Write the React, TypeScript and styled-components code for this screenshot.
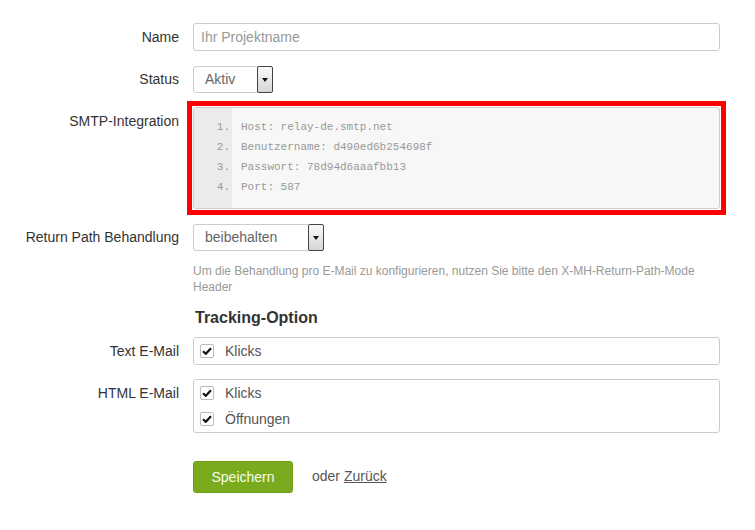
import React from "react";
import styled, { createGlobalStyle } from "styled-components";

const GlobalStyle = createGlobalStyle`
  html, body { margin: 0; padding: 0; background: #fff; }
  body {
    font-family: "Liberation Sans", Arial, sans-serif;
    font-size: 14px;
    color: #333;
  }
`;

const Form = styled.form`
  width: 755px;
  padding-top: 23px;
  display: flex;
  flex-direction: column;
`;

const Row = styled.div<{ $mb: number }>`
  display: grid;
  grid-template-columns: 179px 527px;
  column-gap: 14px;
  margin-bottom: ${(p) => p.$mb}px;
`;

const Label = styled.label<{ $lh?: number }>`
  text-align: right;
  line-height: ${(p) => p.$lh ?? 28}px;
  color: #333;
  white-space: nowrap;
`;

const TextInput = styled.input`
  box-sizing: border-box;
  width: 527px;
  height: 28px;
  border: 1px solid #ccc;
  border-radius: 3px;
  padding: 0 7px;
  font-family: "Liberation Sans", Arial, sans-serif;
  font-size: 14px;
  color: #555;
  outline: none;
  &::placeholder { color: #999; }
`;

const Select = styled.div<{ $w: number }>`
  box-sizing: border-box;
  width: ${(p) => p.$w}px;
  height: 27px;
  border: 1px solid #ccc;
  border-radius: 3px;
  display: flex;
  align-items: stretch;
  justify-content: space-between;
  background: #fff;
`;

const SelectValue = styled.span`
  padding-left: 11px;
  line-height: 25px;
  color: #666;
  font-size: 14px;
`;

const SelectArrow = styled.span`
  box-sizing: border-box;
  width: 16px;
  margin: -1px -1px -1px 0;
  border: 1px solid #444;
  border-radius: 2px;
  background: linear-gradient(#fafafa, #d6d6d6);
  display: flex;
  align-items: center;
  justify-content: center;
  &::after {
    content: "";
    width: 0;
    height: 0;
    border-left: 3.5px solid transparent;
    border-right: 3.5px solid transparent;
    border-top: 4px solid #111;
  }
`;

const Highlight = styled.div`
  width: 527px;
  outline: 5px solid #ff0000;
  outline-offset: 1px;
`;

const CodeBox = styled.div`
  box-sizing: border-box;
  width: 527px;
  height: 102px;
  border: 1px solid #ccc;
  border-radius: 3px;
  background: #f7f7f7;
  display: flex;
  overflow: hidden;
`;

const Gutter = styled.ol`
  margin: 0;
  padding: 9px 2px 0 0;
  width: 38px;
  box-sizing: border-box;
  background: #ebebeb;
  list-style: none;
  text-align: right;
  font-family: "Liberation Mono", "Courier New", monospace;
  font-size: 11px;
  line-height: 20px;
  color: #999;
`;

const CodeLines = styled.div`
  padding: 9px 0 0 9px;
  font-family: "Liberation Mono", "Courier New", monospace;
  font-size: 11px;
  line-height: 20px;
  color: #999;
  white-space: pre;
`;

const Help = styled.p`
  margin: 0;
  font-size: 12px;
  line-height: 16px;
  color: #999;
`;

const SectionTitle = styled.h3`
  margin: 0;
  padding-left: 2px;
  font-size: 16px;
  font-weight: bold;
  line-height: 20px;
  color: #333;
`;

const CheckGroup = styled.div`
  box-sizing: border-box;
  width: 527px;
  border: 1px solid #ccc;
  border-radius: 3px;
  padding: 0 6px;
  display: flex;
  flex-direction: column;
`;

const CheckRow = styled.label`
  height: 26px;
  display: flex;
  align-items: center;
  gap: 11px;
  color: #555;
  font-size: 14px;
`;

const Box = styled.span`
  box-sizing: border-box;
  width: 14px;
  height: 14px;
  border: 1px solid #bbb;
  border-radius: 2px;
  background: #fff;
  display: flex;
  align-items: center;
  justify-content: center;
`;

const Actions = styled.div`
  display: flex;
  align-items: center;
  gap: 19px;
`;

const SaveButton = styled.button`
  box-sizing: border-box;
  width: 100px;
  height: 32px;
  border: 1px solid #6f9d1a;
  border-radius: 3px;
  background: #7aab1e;
  color: #f5fbe9;
  font-family: "Liberation Sans", Arial, sans-serif;
  font-size: 14px;
  padding: 0;
`;

const Or = styled.span`
  color: #555;
  font-size: 14px;
  margin-top: -2px;
`;

const BackLink = styled.a`
  color: #555;
  text-decoration: underline;
`;

const Check = ({ label }: { label: string }) => (
  <CheckRow>
    <Box>
      <svg width="10" height="8" viewBox="0 0 10 8">
        <path d="M1 4.2 L3.8 6.8 L9 1.2" fill="none" stroke="#111" strokeWidth="2.2" />
      </svg>
    </Box>
    {label}
  </CheckRow>
);

const codeLines = [
  "Host: relay-de.smtp.net",
  "Benutzername: d490ed6b254698f",
  "Passwort: 78d94d6aaafbb13",
  "Port: 587",
];

export default function App() {
  return (
    <>
      <GlobalStyle />
      <Form onSubmit={(e) => e.preventDefault()}>
        <Row $mb={15}>
          <Label>Name</Label>
          <TextInput placeholder="Ihr Projektname" />
        </Row>
        <Row $mb={14}>
          <Label $lh={27}>Status</Label>
          <Select $w={80}>
            <SelectValue>Aktiv</SelectValue>
            <SelectArrow />
          </Select>
        </Row>
        <Row $mb={15}>
          <Label>SMTP-Integration</Label>
          <Highlight>
            <CodeBox>
              <Gutter>
                {codeLines.map((_, i) => (
                  <li key={i}>{i + 1}.</li>
                ))}
              </Gutter>
              <CodeLines>
                {codeLines.map((l) => (
                  <div key={l}>{l}</div>
                ))}
              </CodeLines>
            </CodeBox>
          </Highlight>
        </Row>
        <Row $mb={12}>
          <Label $lh={27}>Return Path Behandlung</Label>
          <Select $w={131}>
            <SelectValue>beibehalten</SelectValue>
            <SelectArrow />
          </Select>
        </Row>
        <Row $mb={13}>
          <span />
          <Help>
            Um die Behandlung pro E-Mail zu konfigurieren, nutzen Sie bitte den X-MH-Return-Path-Mode Header
          </Help>
        </Row>
        <Row $mb={9}>
          <span />
          <SectionTitle>Tracking-Option</SectionTitle>
        </Row>
        <Row $mb={14}>
          <Label>Text E-Mail</Label>
          <CheckGroup>
            <Check label="Klicks" />
          </CheckGroup>
        </Row>
        <Row $mb={28}>
          <Label>HTML E-Mail</Label>
          <CheckGroup>
            <Check label="Klicks" />
            <Check label="Öffnungen" />
          </CheckGroup>
        </Row>
        <Row $mb={0}>
          <span />
          <Actions>
            <SaveButton type="submit">Speichern</SaveButton>
            <Or>
              oder <BackLink href="#">Zurück</BackLink>
            </Or>
          </Actions>
        </Row>
      </Form>
    </>
  );
}
